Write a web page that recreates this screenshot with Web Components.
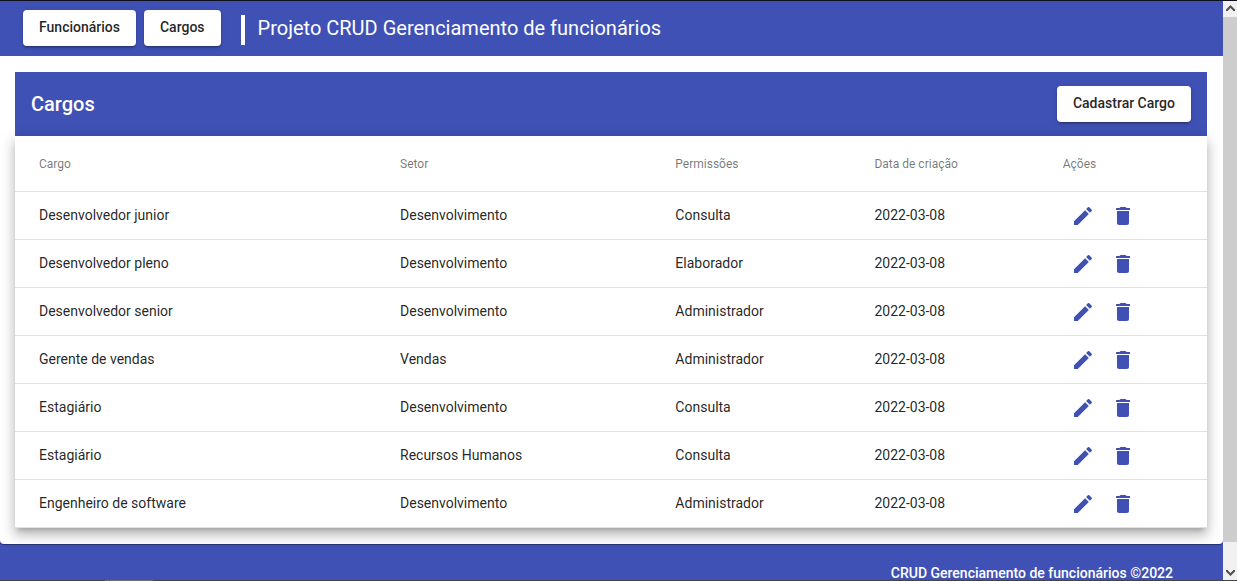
<!DOCTYPE html>
<html lang="pt-BR">
<head>
<meta charset="utf-8">
<meta name="viewport" content="width=device-width, initial-scale=1">
<title>Projeto CRUD Gerenciamento de funcionários</title>
<style>
  html, body { height: 100%; margin: 0; }
  body { font: 400 14px/20px Roboto, "Liberation Sans", sans-serif; color: rgba(0,0,0,.87); --primary: #3f51b5; }
</style>
</head>
<body>
<app-window>
  <app-toolbar heading="Projeto CRUD Gerenciamento de funcionários">
    <app-button>Funcionários</app-button>
    <app-button>Cargos</app-button>
  </app-toolbar>
  <app-panel heading="Cargos">
    <app-button slot="action">Cadastrar Cargo</app-button>
    <cargo-table></cargo-table>
  </app-panel>
  <app-footer>CRUD Gerenciamento de funcionários ©2022</app-footer>
</app-window>

<script>
const define = (name, html, setup) => {
  const template = document.createElement('template');
  template.innerHTML = html;
  customElements.define(name, class extends HTMLElement {
    constructor() {
      super();
      this.attachShadow({ mode: 'open' }).append(template.content.cloneNode(true));
    }
    connectedCallback() { if (setup) setup(this, this.shadowRoot); }
  });
};
const setHeading = (el, root) => { root.querySelector('.heading').textContent = el.getAttribute('heading'); };

define('app-window', `
  <style>
    :host { display: flex; flex-direction: column; height: 100vh; overflow: hidden; }
    .top { flex: none; height: 1px; background: #10101c; }
    .bottom { flex: none; display: flex; height: 1px; background: #444; padding-left: 105px; }
    .bottom i { width: 48px; background: #6c6c6c; }
    .body { flex: 1; min-height: 0; display: flex; }
    .page { flex: 1; min-width: 0; overflow: hidden; background: #fff; }
  </style>
  <div class="top"></div>
  <div class="body"><div class="page"><slot></slot></div><scroll-bar></scroll-bar></div>
  <div class="bottom"><i></i></div>`);

define('scroll-bar', `
  <style>
    :host { display: flex; flex-direction: column; flex: none; width: 14px; background: #f1f1f1; }
    svg { display: block; flex: none; width: 14px; height: 16px; fill: none; stroke: #505050; stroke-width: 2; }
    .track { flex: 1; }
    .thumb { height: 96%; background: #cdcdcd; }
  </style>
  <svg viewBox="0 0 14 16" aria-hidden="true"><path d="M4 10V9L7.500 5.500L11 9V10"/></svg>
  <div class="track"><div class="thumb"></div></div>
  <svg viewBox="0 0 14 16" aria-hidden="true"><path d="M4 6V7L7.500 10.500L11 7V6"/></svg>`);

define('app-button', `
  <style>
    :host { display: block; }
    button { display: block; height: 36px; margin: 0; padding: 0 16px 2px; border: 0; border-radius: 4px; background: #fff; color: rgba(0,0,0,.87);
      font: 500 14px/34px Roboto, "Liberation Sans", sans-serif; white-space: nowrap; cursor: pointer;
      box-shadow: 0 3px 1px -2px rgba(0,0,0,.2), 0 2px 2px 0 rgba(0,0,0,.14), 0 1px 5px 0 rgba(0,0,0,.12); }
  </style>
  <button type="button"><slot></slot></button>`);

define('app-toolbar', `
  <style>
    :host { display: block; }
    header { display: flex; align-items: center; height: 55px; padding: 0 23px 1px; background: var(--primary); color: #fff; box-sizing: border-box; }
    nav { display: flex; gap: 8px; }
    .bar { width: 4px; height: 30px; margin: 4px 13px 0 20px; background: #fff; }
    .heading { margin: 0; font-size: 20px; line-height: 32px; font-weight: 400; white-space: nowrap; }
  </style>
  <header><nav><slot></slot></nav><span class="bar"></span><h1 class="heading"></h1></header>`, setHeading);

define('app-panel', `
  <style>
    :host { display: block; background: var(--primary); }
    main { padding: 16px 16px 16px 15px; background: #fff; border-radius: 0 0 4px 4px; overflow: hidden;
      box-shadow: 0 1px 1px rgba(0,0,0,.4); position: relative; }
    .bar { display: flex; align-items: center; justify-content: space-between; height: 64px; padding: 0 16px; background: var(--primary); color: #fff; }
    .heading { margin: 0; font-size: 20px; line-height: 32px; font-weight: 500; }
  </style>
  <main><div class="bar"><h2 class="heading"></h2><slot name="action"></slot></div><slot></slot></main>`, setHeading);

define('icon-button', `
  <style>
    :host { display: block; }
    button { display: block; width: 40px; height: 40px; padding: 8px; border: 0; border-radius: 50%; background: none; color: var(--primary); cursor: pointer; }
    svg { display: block; width: 24px; height: 24px; fill: currentColor; }
  </style>
  <button type="button"><svg viewBox="0 0 24 24" aria-hidden="true"><path/></svg></button>`, (el, root) => {
  const shapes = {
    edit: 'M3 17.25V21h3.750L17.810 9.940l-3.750-3.750L3 17.250zM20.710 7.040a1 1 0 0 0 0-1.410l-2.340-2.340a1 1 0 0 0-1.410 0l-1.830 1.830 3.750 3.750 1.830-1.830z',
    delete: 'M6 19c0 1.100.9 2 2 2h8c1.100 0 2-.9 2-2V7H6v12zM19 4h-3.500l-1-1h-5l-1 1H5v2h14V4z'
  };
  root.querySelector('path').setAttribute('d', shapes[el.getAttribute('icon')]);
  root.querySelector('button').setAttribute('aria-label', el.getAttribute('label'));
});

define('cargo-table', `
  <style>
    :host { display: block; background: #fff;
      box-shadow: 0 5px 5px -3px rgba(0,0,0,.2), 0 8px 10px 1px rgba(0,0,0,.14), 0 3px 14px 2px rgba(0,0,0,.12); }
    table { width: 100%; table-layout: fixed; border-collapse: separate; border-spacing: 0; }
    th, td { padding: 0; border-bottom: 1px solid #e0e0e0; text-align: left; vertical-align: middle; box-sizing: border-box; }
    th:first-child, td:first-child { padding-left: 24px; }
    th { height: 56px; font-size: 12px; font-weight: 400; color: rgba(0,0,0,.54); }
    td { height: 48px; padding-bottom: 2px; }
    td:last-child { padding-bottom: 0; }
    .name { width: 32.3%; } .sector { width: 23.1%; } .access { width: 16.7%; } .date { width: 15.8%; }
    .actions { display: flex; padding-top: 1px; }
  </style>
  <table>
    <colgroup><col class="name"><col class="sector"><col class="access"><col class="date"><col></colgroup>
    <thead><tr><th>Cargo</th><th>Setor</th><th>Permissões</th><th>Data de criação</th><th>Ações</th></tr></thead>
    <tbody></tbody>
  </table>`, (el, root) => {
  const rows = [
    ['Desenvolvedor junior', 'Desenvolvimento', 'Consulta'],
    ['Desenvolvedor pleno', 'Desenvolvimento', 'Elaborador'],
    ['Desenvolvedor senior', 'Desenvolvimento', 'Administrador'],
    ['Gerente de vendas', 'Vendas', 'Administrador'],
    ['Estagiário', 'Desenvolvimento', 'Consulta'],
    ['Estagiário', 'Recursos Humanos', 'Consulta'],
    ['Engenheiro de software', 'Desenvolvimento', 'Administrador']
  ];
  root.querySelector('tbody').innerHTML = rows.map(r => `<tr>${[...r, '2022-03-08'].map(t => `<td>${t}</td>`).join('')}
    <td><div class="actions"><icon-button icon="edit" label="Editar"></icon-button><icon-button icon="delete" label="Excluir"></icon-button></div></td></tr>`).join('');
});

define('app-footer', `
  <style>
    :host { display: block; }
    footer { padding: 19px 50px 16px; background: var(--primary); color: #fff; text-align: right; font-weight: 500; }
  </style>
  <footer><slot></slot></footer>`);
</script>
</body>
</html>
